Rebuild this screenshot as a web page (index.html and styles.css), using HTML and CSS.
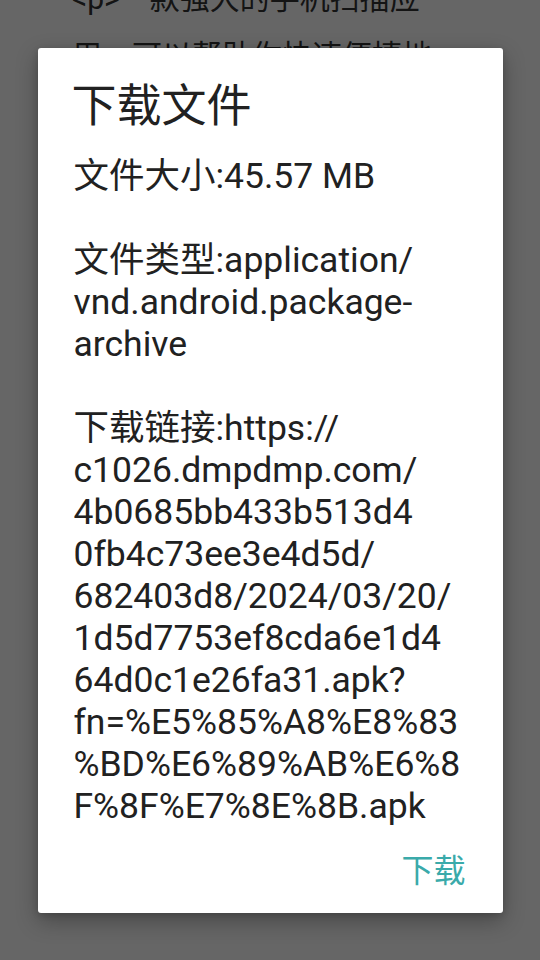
FILE: index.html
```html
<!DOCTYPE html>
<html lang="zh-CN">
<head>
<meta charset="utf-8">
<title>下载文件</title>
<link rel="stylesheet" href="styles.css">
</head>
<body>
<div class="screen">
  <div class="bg-content">
    <p class="bg-text">&lt;p&gt;一款强大的手机扫描应<br>用，可以帮助你快速便捷地</p>
  </div>
  <div class="scrim">
    <div class="dialog">
      <h1 class="dialog-title">下载文件</h1>
      <p class="dialog-body">文件大小:45.57 MB<br><br>文件类型:application/<br>vnd.android.package-<br>archive<br><br>下载链接:https://<br>c1026.dmpdmp.com/<br>4b0685bb433b513d4<br>0fb4c73ee3e4d5d/<br>682403d8/2024/03/20/<br>1d5d7753ef8cda6e1d4<br>64d0c1e26fa31.apk?<br>fn=%E5%85%A8%E8%83<br>%BD%E6%89%AB%E6%8<br>F%8F%E7%8E%8B.apk</p>
      <div class="dialog-actions">
        <span class="dialog-button">下载</span>
      </div>
    </div>
  </div>
</div>
</body>
</html>
```
FILE: styles.css
```css
html, body {
  margin: 0;
  padding: 0;
}
body {
  font-family: Roboto, "Noto Sans CJK SC", sans-serif;
  background: #ffffff;
}
.screen {
  position: relative;
  width: 540px;
  height: 960px;
  overflow: hidden;
  background: #ffffff;
}
.bg-content {
  padding: 0 72px;
  margin-top: -30px;
}
.bg-text {
  margin: 0;
  font-size: 30px;
  line-height: 57px;
  color: #333333;
}
.scrim {
  position: absolute;
  inset: 0;
  background: rgba(0, 0, 0, 0.6);
  display: flex;
  align-items: center;
  justify-content: center;
}
.dialog {
  width: 465px;
  height: 865px;
  box-sizing: border-box;
  background: #ffffff;
  border-radius: 3px;
  padding: 32px 37px 0 36px;
  display: flex;
  flex-direction: column;
  box-shadow: 0 8px 22px rgba(0, 0, 0, 0.3), 0 2px 6px rgba(0, 0, 0, 0.15);
}
.dialog-title {
  margin: 0 0 0 -2px;
  font-size: 45px;
  line-height: 54px;
  font-weight: 400;
  color: #212121;
}
.dialog-body {
  margin: 21px 0 0;
  font-size: 35.5px;
  line-height: 42px;
  color: #212121;
  white-space: nowrap;
}
.dialog-actions {
  margin-top: 23px;
  display: flex;
  justify-content: flex-end;
}
.dialog-button {
  font-size: 32px;
  line-height: 42px;
  color: #3aaaaa;
}
```
